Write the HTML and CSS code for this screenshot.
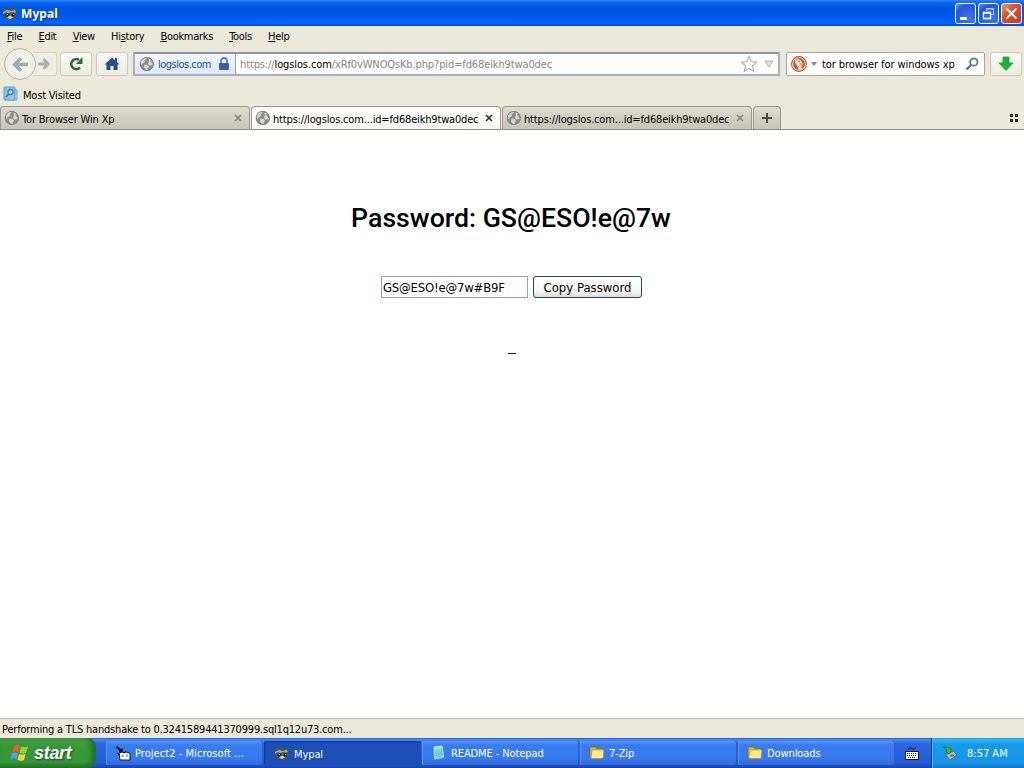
FILE: index.html
```
<!DOCTYPE html>
<html lang="en">
<head>
    <meta charset="UTF-8">
    <meta name="viewport" content="width=device-width, initial-scale=1.0">
    <title>Mypal</title>
    <link rel="stylesheet" href="styles.css">
</head>
<body>
    <!-- Shared icons -->
    <svg class="symbols" aria-hidden="true">
        <symbol id="globe" viewBox="0 0 16 16">
            <circle cx="7.800" cy="8" r="7" fill="#8b8d88"/>
            <path d="M1.500 6Q3 2 6.500 1.500L8 3 5.500 4 6 6 3.500 7.500 2.500 9.500zM9.500 2.500l3 1L11 5l2 2 1.200 2.500L12 9l-1.500 1L9 7.500 10 5zM5.500 8.500l3 .5 1.500 2-1.500 1.500.5 1.500-2.500-.5L5 11z" fill="#d9dad4"/>
            <circle cx="7.800" cy="8" r="6.600" fill="none" stroke="#7e807b" stroke-width=".8"/>
        </symbol>
        <symbol id="mypal" viewBox="0 0 16 16">
            <path d="M1 3l3 1 3-1 3 1 1-2 2 1 2-1-1 4 1 4-2 4-3 1H5L2 12 1 8z" fill="#46565a"/>
            <path d="M1 7l4-2 4 1 4-1 1 2-2 .5-3-.5-2 1-3-1-3 2z" fill="#a3ada5"/>
            <path d="M3.500 9l3-.5.500 1.500-1.500 2-2-1zM10 8.500l3 .5-.5 2.500-2.500-.5z" fill="#141d20"/>
            <path d="M5 12.500l3-2 3 2-3 1.500zM4.500 9h1.500v1.200H4.500zM11 9h1.500v1.200H11z" fill="#d0d5ca"/>
        </symbol>
        <symbol id="folder" viewBox="0 0 16 16">
            <path d="M1 3.500Q1 2 2.500 2H6l1.500 1.500H13q1 0 1 1V13H2q-1 0-1-1z" fill="#e5b63c" stroke="#7d641f" stroke-width=".7"/>
            <path d="M3 5H15L14 13.500H2z" fill="#ffe892" stroke="#a9862c" stroke-width=".6"/>
        </symbol>
    </svg>

    <div class="desktop">
        <header class="title-bar">
            <svg class="icon"><use href="#mypal"/></svg>
            <h1>Mypal</h1>
            <div class="window-buttons">
                <button class="win-btn" aria-label="Minimize"><svg viewBox="0 0 21 21"><path d="M5 14h7v3H5z" fill="#fff"/></svg></button>
                <button class="win-btn" aria-label="Restore"><svg viewBox="0 0 21 21"><path d="M8.500 8V5.500h7v6H13M8 6h8" fill="none" stroke="#b5cdfb"/><path d="M5.500 9.500h7v6h-7zM5 10h8" fill="none" stroke="#fff" stroke-width="1.300"/></svg></button>
                <button class="win-btn close" aria-label="Close"><svg viewBox="0 0 21 21"><path d="M5.500 5.500l10 10M15.500 5.500l-10 10" stroke="#fff" stroke-width="2"/></svg></button>
            </div>
        </header>

        <nav class="menu-bar">
            <span><u>F</u>ile</span>
            <span><u>E</u>dit</span>
            <span><u>V</u>iew</span>
            <span>Hi<u>s</u>tory</span>
            <span><u>B</u>ookmarks</span>
            <span><u>T</u>ools</span>
            <span><u>H</u>elp</span>
        </nav>

        <div class="toolbar">
            <div class="history-buttons">
                <button class="back" aria-label="Back"><svg viewBox="0 0 16 16"><path d="M8.500 2L2.500 8l6 6M3 8h12" fill="none" stroke="#a1aab2" stroke-width="3.200"/></svg></button>
                <button class="forward" aria-label="Forward"><svg viewBox="0 0 16 16"><path d="M7.500 2.500L13 8l-5.500 5.500M1 8h12" fill="none" stroke="#a9b0b6" stroke-width="3.200"/></svg></button>
            </div>
            <button class="tool-btn" aria-label="Reload"><svg viewBox="0 0 16 16"><path d="M12 11.500A5 5 0 1 1 11 4" fill="none" stroke="#2f6848" stroke-width="2.600"/><path d="M14.500 1v7H8z" fill="#2f6848"/></svg></button>
            <button class="tool-btn" aria-label="Home"><svg viewBox="0 0 16 16"><path d="M8 1.500l7.500 7h-2V14H9.500v-4h-3v4H2.500V8.500h-2z" fill="#244f8b"/><path d="M11 2h2v4h-2z" fill="#244f8b"/></svg></button>
            <div class="address-bar">
                <div class="identity">
                    <svg class="icon"><use href="#globe"/></svg>
                    <span>logslos.com</span>
                    <svg class="lock" viewBox="0 0 12 14"><path d="M3 7V4a3 3 0 0 1 6 0v3" fill="none" stroke="#5b7ab4" stroke-width="1.800"/><rect x="1" y="6" width="10" height="7" rx="1" fill="#3b5fa3"/></svg>
                </div>
                <span class="url">https://<b>logslos.com</b>/xRf0vWNOQsKb.php?pid=fd68eikh9twa0dec</span>
                <svg class="star" viewBox="0 0 18 18"><path d="M9 1.500l2.200 5 5.300.6-4 3.600 1.200 5.500L9 13.500l-4.700 2.700 1.200-5.500-4-3.600 5.300-.6z" fill="#fff" stroke="#b0b2b5" stroke-width="1.200"/></svg>
                <svg class="drop" viewBox="0 0 10 8"><path d="M1 1h8L5 7z" fill="#dedfe0" stroke="#b5b7ba"/></svg>
            </div>
            <div class="search-bar">
                <svg class="icon" viewBox="0 0 16 16"><circle cx="8" cy="8" r="7.400" fill="#fff" stroke="#c54427" stroke-width="1.100"/><circle cx="8" cy="8" r="5.900" fill="#d25328"/><path d="M4 4.500q4-3 6.500 1L12 8l-1.500 1 .5 4-3 1-1.500-4Q4 8 4 4.500z" fill="#fff3df"/><path d="M8.500 7l4 .5-1 1.700-3-.2z" fill="#efac2e"/><path d="M9 11l3-1v2.500z" fill="#6ba344"/><circle cx="8" cy="5.300" r=".8" fill="#304e75"/></svg>
                <svg class="engine-drop" viewBox="0 0 6 4"><path d="M0 0h6L3 4z" fill="#858b86"/></svg>
                <span>tor browser for windows xp</span>
                <svg class="lens" viewBox="0 0 14 14"><circle cx="8.800" cy="5" r="3.700" fill="#f4f8fc" stroke="#527498" stroke-width="1.700"/><path d="M6 8L1.500 12.500" stroke="#527498" stroke-width="2.300"/></svg>
            </div>
            <button class="tool-btn download" aria-label="Downloads"><svg viewBox="0 0 16 16"><path d="M5 1h6v6h4l-7 7.500L1 7h4z" fill="#18b536" stroke="#169330" stroke-width=".7"/></svg></button>
        </div>

        <div class="bookmarks-bar">
            <svg class="icon" viewBox="0 0 16 16"><path d="M10 4h4v10H5z" fill="#c0def2" stroke="#6ba5cc"/><rect x="1" y="1" width="11" height="13" rx="1" fill="#8fc5e6" stroke="#5c9cc6"/><circle cx="7.500" cy="6" r="2.500" fill="#b9e0f6" stroke="#3a7dac" stroke-width="1.300"/><path d="M5.700 8L3 11" stroke="#3a7dac" stroke-width="1.700"/></svg>
            <span>Most Visited</span>
        </div>

        <div class="tab-bar">
            <div class="tab">
                <svg class="icon"><use href="#globe"/></svg>
                <span class="tab-title">Tor Browser Win Xp</span>
                <svg class="tab-close" viewBox="0 0 8 8"><path d="M1 1l6 6M7 1L1 7"/></svg>
            </div>
            <div class="tab active">
                <svg class="icon"><use href="#globe"/></svg>
                <span class="tab-title">https://logslos.com...id=fd68eikh9twa0dec</span>
                <svg class="tab-close" viewBox="0 0 8 8"><path d="M1 1l6 6M7 1L1 7"/></svg>
            </div>
            <div class="tab">
                <svg class="icon"><use href="#globe"/></svg>
                <span class="tab-title">https://logslos.com...id=fd68eikh9twa0dec</span>
                <svg class="tab-close" viewBox="0 0 8 8"><path d="M1 1l6 6M7 1L1 7"/></svg>
            </div>
            <div class="tab new-tab"><svg viewBox="0 0 10 10"><path d="M5 0v10M0 5h10" stroke="#4b4c48" stroke-width="2"/></svg></div>
            <svg class="tab-groups" viewBox="0 0 9 8"><path d="M0 0h3v3H0zM5 0h3v3H5zM0 5h3v3H0zM5 5h3v3H5z" fill="#262626"/></svg>
        </div>

        <main class="page">
            <h2>Password: GS@ESO!e@7w</h2>
            <div class="password-row">
                <input type="text" value="GS@ESO!e@7w#B9F" aria-label="Password">
                <button>Copy Password</button>
            </div>
            <a class="blank-link" href="#" aria-label="Link"></a>
        </main>

        <div class="status-bar"><span>Performing a TLS handshake to 0.3241589441370999.sql1q12u73.com...</span></div>

        <footer class="taskbar">
            <button class="start">
                <svg viewBox="0 0 20 20"><path d="M4 3q3-2 6 0L8.500 9q-3-1.500-6 0z" fill="#ed5b2d"/><path d="M11 3.500q3 1.500 7 0L16 10q-3 1.500-6.500 0z" fill="#8bd33c"/><path d="M2 10.500q3-1.500 6 0L6.500 16q-3-1.500-6 0z" fill="#579cf3"/><path d="M9 11q3 1.500 6.500 0L14 17q-3 1.500-6.500 0z" fill="#f9d33c"/></svg>
                <span>start</span>
            </button>
            <div class="tasks">
                <div class="task project">
                    <svg class="icon" viewBox="0 0 16 16"><path d="M2 1l4 3 2-1v4H4V5L1 3z" fill="#101820"/><path d="M4 8l3-1 2 1 2-1 4 1v7H5z" fill="#fff" stroke="#101820"/><path d="M6 10h3v2H6zM11 9h2v3h-2z" fill="#a9b6c8"/><path d="M2 8l3 2M7 6l2 2 2-2" stroke="#101820" fill="none"/></svg>
                    <span>Project2 - Microsoft ...</span>
                </div>
                <div class="task active">
                    <svg class="icon"><use href="#mypal"/></svg>
                    <span>Mypal</span>
                </div>
                <div class="task">
                    <svg class="icon" viewBox="0 0 16 16"><path d="M4 2l8-1 2.500 12-9 2z" fill="#4a8bad"/><path d="M3 2l8-1 1.500 11-9 2z" fill="#93dcef" stroke="#d5f6fd" stroke-width=".8"/><path d="M3.500 6l8-2 1 7.500-8.500 2z" fill="#5cbcd8" opacity=".6"/></svg>
                    <span>README - Notepad</span>
                </div>
                <div class="task">
                    <svg class="icon"><use href="#folder"/></svg>
                    <span>7-Zip</span>
                </div>
                <div class="task">
                    <svg class="icon"><use href="#folder"/></svg>
                    <span>Downloads</span>
                </div>
            </div>
            <svg class="keyboard" viewBox="0 0 14 14"><path d="M3 2.500q2-3 4-1t4-1" fill="none" stroke="#101b3a"/><path d="M0 4h14v9H0z" fill="#101b3a"/><path d="M1 5h12v7H1z" fill="#fff"/><path d="M2 6.500h10M2 8.500h10M3 10.500h8" stroke="#101b3a" stroke-dasharray="1 1"/></svg>
            <div class="tray">
                <svg class="icon" viewBox="0 0 16 16"><path d="M4 10l7-4 4 4-7 5z" fill="#b9bdb4" stroke="#596760" stroke-width=".8"/><path d="M8 10l3-1 1 2-3 1z" fill="#657279"/><path d="M1 2l8 1v3L7 9 4 7l1-2z" fill="#38b842" stroke="#187a29" stroke-width=".7"/></svg>
                <span>8:57 AM</span>
            </div>
        </footer>
    </div>
</body>
</html>
```
FILE: styles.css
```
/* Reset and base styles */
* {
    margin: 0;
    padding: 0;
    box-sizing: border-box;
}

body {
    width: 1024px;
    height: 768px;
    overflow: hidden;
    font: 11px/14px "DejaVu Sans Condensed", "DejaVu Sans", sans-serif;
    font-stretch: condensed;
    letter-spacing: -0.2px;
    color: #000;
    background: #fff;
}

svg {
    display: block;
    flex: none;
}

button {
    border: none;
    background: none;
    font: inherit;
    letter-spacing: inherit;
}

.symbols {
    position: absolute;
    width: 0;
    height: 0;
}

.icon {
    width: 16px;
    height: 16px;
}

.desktop {
    display: flex;
    flex-direction: column;
    height: 768px;
    background: #ebe9d9;
    white-space: nowrap;
}

/* Title bar */
.title-bar {
    display: flex;
    align-items: center;
    height: 26px;
    padding: 0 2px;
    background: linear-gradient(#2b84fa 0, #0865ee 3px, #0054e3 8px, #0056e8 15px, #0265ff 23px, #0048cf 26px);
}

.title-bar h1 {
    margin: 1px 0 0 3px;
    flex: 1;
    font: bold 12px/16px "Noto Sans", sans-serif;
    letter-spacing: 0.1px;
    color: #fff;
    text-shadow: 1px 1px 1px #073886;
}

.window-buttons {
    display: flex;
    gap: 2px;
}

.win-btn {
    width: 21px;
    height: 21px;
    border: 1px solid #fff;
    border-radius: 3px;
    background: radial-gradient(circle at 70% 80%, #3c78ed, #2459d8 70%, #6393f3);
}

.win-btn svg {
    width: 21px;
    height: 21px;
    margin: -1px;
}

.win-btn.close {
    background: linear-gradient(135deg, #ef9878, #dd4e2c 40%, #c63b1c);
}

/* Menus */
.menu-bar {
    display: flex;
    height: 20px;
    padding: 4px 7px 0;
    letter-spacing: -0.3px;
}

.menu-bar span {
    margin-right: 16.2px;
}

.menu-bar u {
    text-underline-offset: 1px;
}

/* Navigation toolbar */
.toolbar {
    display: flex;
    align-items: center;
    height: 36px;
    padding-left: 4px;
}

.history-buttons {
    display: flex;
    align-items: center;
    width: 56px;
}

.back {
    display: grid;
    place-items: center;
    z-index: 1;
    width: 32px;
    height: 32px;
    border: 1px solid #b4b2a6;
    border-radius: 50%;
    background: #f1f0e7;
}

.back svg {
    width: 17px;
    height: 17px;
}

.forward {
    width: 23px;
    height: 24px;
    margin-left: -2px;
    padding: 4px 3px;
    border: 1px solid #d5d3c7;
    border-left: none;
    border-radius: 0 3px 3px 0;
    background: #eeede2;
}

.forward svg {
    width: 14px;
    height: 14px;
}

.tool-btn {
    display: grid;
    place-items: center;
    width: 32px;
    height: 24px;
    margin-right: 4px;
    border: 1px solid #cbc9bc;
    border-radius: 3px;
    background: linear-gradient(#f9f8f3, #eeede2);
}

.tool-btn svg {
    width: 16px;
    height: 16px;
}

.address-bar {
    display: flex;
    align-items: center;
    width: 647px;
    height: 24px;
    margin: 0 6px 0 1px;
    border: 2px solid #a7adcb;
    border-top-color: #8e94b0;
    background: #fff;
}

.identity {
    display: flex;
    align-items: center;
    width: 101px;
    height: 20px;
    padding-left: 4px;
    border-right: 1px solid #8e9fc2;
    background: linear-gradient(#f1f7ff, #dbe7fa);
    color: #23518f;
}

.identity span {
    width: 57px;
    margin: 2px 0 0 3px;
    letter-spacing: -0.5px;
}

.lock {
    width: 12px;
    height: 14px;
    margin-left: 3px;
}

.url {
    flex: 1;
    padding: 2px 0 0 4px;
    letter-spacing: -0.12px;
    color: #858585;
}

.url b {
    font-weight: normal;
    color: #000;
}

.star {
    width: 18px;
    height: 18px;
}

.drop {
    width: 10px;
    height: 8px;
    margin: 0 4px 0 6px;
}

.search-bar {
    display: flex;
    align-items: center;
    width: 199px;
    height: 24px;
    margin-right: 5px;
    padding: 0 5px 0 4px;
    border: 1px solid #aaa89c;
    border-radius: 2px;
    background: #fff;
}

.search-bar span {
    flex: 1;
    margin: 2px 0 0 5px;
    letter-spacing: -0.07px;
}

.engine-drop {
    width: 6px;
    height: 4px;
    margin-left: 4px;
}

.lens {
    width: 14px;
    height: 14px;
}

.tool-btn.download {
    margin-right: 0;
}

/* Bookmarks */
.bookmarks-bar {
    display: flex;
    align-items: center;
    height: 24px;
    padding: 0 3px;
}

.bookmarks-bar span {
    margin: 3px 0 0 4px;
}

/* Tabs */
.tab-bar {
    display: flex;
    gap: 1px;
    height: 24px;
    border-bottom: 1px solid #93928a;
}

.tab {
    display: flex;
    align-items: center;
    width: 250px;
    height: 23px;
    padding: 0 7px 0 3px;
    border: 1px solid #9b998e;
    border-bottom: none;
    border-radius: 4px 4px 0 0;
    background: linear-gradient(#dddbd0, #c7c5b8);
}

.tab.active {
    background: linear-gradient(#fff, #f7f6f0);
}

.tab-title {
    flex: 1;
    margin: 3px 0 0 2px;
    letter-spacing: -0.17px;
}

.tab-close {
    width: 8px;
    height: 8px;
    stroke: #85847d;
    stroke-width: 1.7;
}

.active .tab-close {
    stroke: #353530;
}

.new-tab {
    width: 28px;
    padding: 0;
    justify-content: center;
}

.new-tab svg {
    width: 10px;
    height: 10px;
}

.tab-groups {
    width: 9px;
    height: 8px;
    margin: 8px 5px 0 auto;
}

/* Web page */
.page {
    display: flex;
    flex-direction: column;
    align-items: center;
    height: 588px;
    padding-top: 72px;
    background: #fff;
}

.page h2 {
    margin-right: 2px;
    font: 500 26.7px/32px Roboto, sans-serif;
    letter-spacing: 0;
}

.password-row {
    display: flex;
    gap: 5px;
    margin: 42px 1px 0 0;
}

.password-row input {
    width: 147px;
    height: 22px;
    padding: 1px 1px 0;
    border: 1px solid #8fa5b2;
    background: #fff;
    color: #000;
    font: 13px/18px "DejaVu Sans Condensed", sans-serif;
    letter-spacing: -0.2px;
}

.password-row button {
    width: 109px;
    height: 22px;
    padding-top: 1px;
    border: 1px solid #23485f;
    border-radius: 3px;
    background: linear-gradient(#fff, #f4f4ef 75%, #dcdbd3);
    color: #000;
    font-size: 13px;
    letter-spacing: 0;
}

.blank-link {
    width: 8px;
    height: 1px;
    margin-top: 55px;
    background: #16167c;
}

/* Status bar */
.status-bar {
    height: 20px;
    padding: 4px 2px 0;
    border-top: 1px solid #c1c2b7;
}

/* Taskbar */
.taskbar {
    display: flex;
    height: 30px;
    color: #fff;
    background: linear-gradient(#245edb 0, #4c8df2 2px, #2b66df 5px, #245cdb 25px, #1941a5 30px);
}

.start {
    display: flex;
    align-items: center;
    width: 96px;
    height: 30px;
    padding-left: 10px;
    border-radius: 0 9px 9px 0;
    background: linear-gradient(#5ca95a 0, #459e43 3px, #399638 8px, #37963a 24px, #247124 30px);
    box-shadow: inset -4px 0 5px #216f29;
    color: #fff;
}

.start svg {
    width: 20px;
    height: 20px;
}

.start span {
    margin: 0 0 1px 4px;
    font: italic bold 18px/22px "Liberation Sans", sans-serif;
    letter-spacing: -0.3px;
    text-shadow: 1px 1px 2px #164f1a;
}

.tasks {
    display: flex;
    gap: 1px;
    width: 790px;
    margin-left: 10px;
    padding-top: 3px;
}

.task {
    display: flex;
    align-items: center;
    width: 157px;
    height: 24px;
    padding-left: 9px;
    border-radius: 2px;
    background: linear-gradient(#5694f8, #397cee 4px, #3878ed 19px, #3068dc);
    box-shadow: inset 1px 0 #5b96f5, inset -1px 0 #285bc5;
}

.task span {
    margin: 1px 0 0 4px;
    letter-spacing: -0.1px;
}

.task.project span {
    letter-spacing: 0.05px;
}

.task.active {
    padding-left: 10px;
    background: #1c4eb6;
    box-shadow: inset 1px 1px 1px #12378b;
}

.task.active span {
    margin-top: 3px;
}

.keyboard {
    width: 14px;
    height: 14px;
    margin: 9px 0 0 9px;
}

.tray {
    display: flex;
    align-items: center;
    margin-left: auto;
    width: 93px;
    padding-left: 10px;
    border-left: 1px solid #103f91;
    background: linear-gradient(#16a1ee 0, #35baf4 2px, #1699e9 6px, #1794e8 25px, #1272c4 30px);
    box-shadow: inset 1px 0 #42bff4;
}

.tray span {
    margin: 1px 0 0 9px;
    letter-spacing: 0;
}
```
